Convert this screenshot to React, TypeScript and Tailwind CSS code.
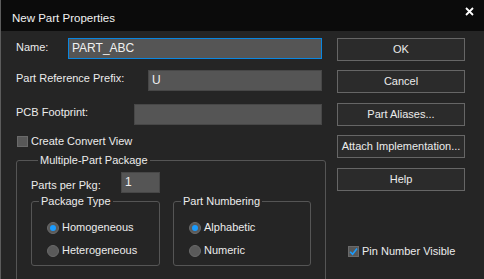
const FONT = "font-['Liberation_Sans',Arial,sans-serif]";

const BUTTONS = ["OK", "Cancel", "Part Aliases...", "Attach Implementation...", "Help"] as const;

function TextBox({ value, focused, className }: { value?: string; focused?: boolean; className: string }) {
  return (
    <div
      className={
        "flex h-[21px] items-center border bg-[#555555] px-[3px] text-[12px] text-[#f0f0f0] " +
        (focused ? "border-[#0a86e0] " : "border-[#474747] ") +
        className
      }
    >
      {value}
    </div>
  );
}

function Radio({ label, checked }: { label: string; checked?: boolean }) {
  return (
    <div className="flex items-center gap-[3px]">
      <span className="flex h-[12px] w-[12px] items-center justify-center rounded-full border border-[#6a6a6a] bg-[#5a5a5a]">
        {checked && <span className="h-[6px] w-[6px] rounded-full bg-[#1a9cff]" />}
      </span>
      <span>{label}</span>
    </div>
  );
}

function GroupBox({ title, className, children }: { title: string; className: string; children: React.ReactNode }) {
  return (
    <fieldset className={"rounded-[3px] border border-[#555555] " + className}>
      <legend className="ml-[7px] px-[2px]">{title}</legend>
      {children}
    </fieldset>
  );
}

export default function App() {
  return (
    <div className={`${FONT} h-[279px] w-[484px] overflow-hidden border-l border-[#5c5c5c] bg-[#252525] text-[11px] leading-[15px] text-[#ececec]`}>
      <div className="flex h-[31px] items-start justify-between bg-[#0b0b0b] pl-[11px] pr-[10px]">
        <span className="pt-[11px] text-[11.5px] text-[#f2f2f2]">New Part Properties</span>
        <svg width="9" height="9" viewBox="0 0 9 9" className="mt-[7px]">
          <path d="M1 1 L8 8 M8 1 L1 8" stroke="#ffffff" strokeWidth="1.8" />
        </svg>
      </div>

      <div className="flex">
        <div className="ml-[15px] w-[306px] pt-[7px]">
          <div className="flex items-start">
            <span className="mt-[2px] w-[52px]">Name:</span>
            <TextBox value="PART_ABC" focused className="flex-1" />
          </div>
          <div className="mt-[11px] flex items-start">
            <span className="mt-[1px] w-[132px]">Part Reference Prefix:</span>
            <TextBox value="U" className="flex-1" />
          </div>
          <div className="mt-[13px] flex items-start">
            <span className="mt-[1px] w-[118px]">PCB Footprint:</span>
            <TextBox className="flex-1" />
          </div>
          <div className="mt-[9px] flex items-center gap-[3px] pl-[1px]">
            <span className="h-[11px] w-[11px] border border-[#6a6a6a] bg-[#585858]" />
            <span>Create Convert View</span>
          </div>
          <GroupBox title="Multiple-Part Package" className="mt-[4px] h-[140px] w-[306px] px-[14px]">
            <div className="mt-[4px] flex items-start">
              <span className="mt-[6px] w-[90px]">Parts per Pkg:</span>
              <TextBox value="1" className="w-[39px]" />
            </div>
            <div className="mt-px flex gap-[13px]">
              <GroupBox title="Package Type" className="h-[72px] w-[129px]">
                <div className="flex flex-col gap-[8px] pl-[15px] pt-[11px]">
                  <Radio label="Homogeneous" checked />
                  <Radio label="Heterogeneous" />
                </div>
              </GroupBox>
              <GroupBox title="Part Numbering" className="h-[72px] w-[138px]">
                <div className="flex flex-col gap-[8px] pl-[15px] pt-[11px]">
                  <Radio label="Alphabetic" checked />
                  <Radio label="Numeric" />
                </div>
              </GroupBox>
            </div>
          </GroupBox>
        </div>

        <div className="ml-[15px] flex w-[128px] flex-col pt-[7px]">
          {BUTTONS.map((b, i) => (
            <div
              key={b}
              className={
                "flex h-[23px] items-center justify-center whitespace-nowrap border border-[#666666] bg-[#2b2b2b] text-[#ececec] " +
                (i === 0 ? "" : i % 2 === 1 ? "mt-[9px]" : "mt-[10px]")
              }
            >
              {b}
            </div>
          ))}
          <div className="mt-[53px] flex items-center gap-[3px] pl-[11px]">
            <span className="flex h-[11px] w-[11px] items-center justify-center border border-[#6a6a6a] bg-[#585858]">
              <svg width="9" height="9" viewBox="0 0 9 9">
                <path d="M1.2 4.8 L3.6 7.2 L8 1.6" fill="none" stroke="#1a9cff" strokeWidth="1.6" />
              </svg>
            </span>
            <span>Pin Number Visible</span>
          </div>
        </div>
      </div>
    </div>
  );
}
